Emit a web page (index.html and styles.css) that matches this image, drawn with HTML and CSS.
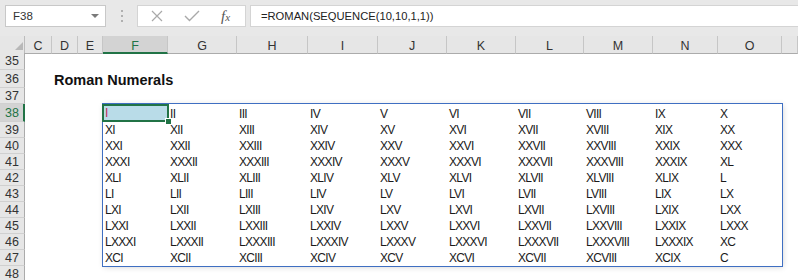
FILE: index.html
```html
<!DOCTYPE html>
<html lang="en">
<head>
    <meta charset="UTF-8">
    <title>Roman Numerals - Sheet</title>
    <link rel="stylesheet" href="styles.css">
</head>
<body>
    <div class="toolbar">
        <div class="namebox">F38<span class="caret"></span></div>
        <div class="grip"><i></i><i></i><i></i></div>
        <div class="fxbox">
            <svg class="icon" width="12" height="12" viewBox="0 0 12 12"><path d="M1 1L11 11M11 1L1 11" stroke="#a9a9a9" stroke-width="1.2" fill="none"/></svg>
            <svg class="icon" width="16" height="12" viewBox="0 0 16 12"><path d="M1 6L5.5 10.5L15 1" stroke="#a9a9a9" stroke-width="1.4" fill="none"/></svg>
            <span class="fx">f<small>x</small></span>
        </div>
        <div class="formula">=ROMAN(SEQUENCE(10,10,1,1))</div>
    </div>

    <div class="colheads">
        <div class="corner"><svg width="25" height="17" viewBox="0 0 25 17"><polygon points="23,6 23,14 15,14" fill="#b8b8b8"/></svg></div>
        <div class="ch">C</div>
        <div class="ch">D</div>
        <div class="ch">E</div>
        <div class="ch sel">F</div>
        <div class="ch">G</div>
        <div class="ch">H</div>
        <div class="ch">I</div>
        <div class="ch">J</div>
        <div class="ch">K</div>
        <div class="ch">L</div>
        <div class="ch">M</div>
        <div class="ch">N</div>
        <div class="ch">O</div>
        <div class="ch"></div>
    </div>

    <div class="body">
        <div class="rowheads">
            <div class="rh r17">35</div>
            <div class="rh r18">36</div>
            <div class="rh r16">37</div>
            <div class="rh r18 sel">38</div>
            <div class="rh">39</div>
            <div class="rh">40</div>
            <div class="rh">41</div>
            <div class="rh">42</div>
            <div class="rh">43</div>
            <div class="rh">44</div>
            <div class="rh">45</div>
            <div class="rh">46</div>
            <div class="rh">47</div>
            <div class="rh">48</div>
        </div>

        <div class="cells">
            <div class="title">Roman Numerals</div>

            <!-- spill range F38:O47 -->
            <div class="spill">
                <div class="c active"><span>I</span></div><div class="c">II</div><div class="c">III</div><div class="c">IV</div><div class="c">V</div><div class="c">VI</div><div class="c">VII</div><div class="c">VIII</div><div class="c">IX</div><div class="c">X</div>
                <div class="c">XI</div><div class="c">XII</div><div class="c">XIII</div><div class="c">XIV</div><div class="c">XV</div><div class="c">XVI</div><div class="c">XVII</div><div class="c">XVIII</div><div class="c">XIX</div><div class="c">XX</div>
                <div class="c">XXI</div><div class="c">XXII</div><div class="c">XXIII</div><div class="c">XXIV</div><div class="c">XXV</div><div class="c">XXVI</div><div class="c">XXVII</div><div class="c">XXVIII</div><div class="c">XXIX</div><div class="c">XXX</div>
                <div class="c">XXXI</div><div class="c">XXXII</div><div class="c">XXXIII</div><div class="c">XXXIV</div><div class="c">XXXV</div><div class="c">XXXVI</div><div class="c">XXXVII</div><div class="c">XXXVIII</div><div class="c">XXXIX</div><div class="c">XL</div>
                <div class="c">XLI</div><div class="c">XLII</div><div class="c">XLIII</div><div class="c">XLIV</div><div class="c">XLV</div><div class="c">XLVI</div><div class="c">XLVII</div><div class="c">XLVIII</div><div class="c">XLIX</div><div class="c">L</div>
                <div class="c">LI</div><div class="c">LII</div><div class="c">LIII</div><div class="c">LIV</div><div class="c">LV</div><div class="c">LVI</div><div class="c">LVII</div><div class="c">LVIII</div><div class="c">LIX</div><div class="c">LX</div>
                <div class="c">LXI</div><div class="c">LXII</div><div class="c">LXIII</div><div class="c">LXIV</div><div class="c">LXV</div><div class="c">LXVI</div><div class="c">LXVII</div><div class="c">LXVIII</div><div class="c">LXIX</div><div class="c">LXX</div>
                <div class="c">LXXI</div><div class="c">LXXII</div><div class="c">LXXIII</div><div class="c">LXXIV</div><div class="c">LXXV</div><div class="c">LXXVI</div><div class="c">LXXVII</div><div class="c">LXXVIII</div><div class="c">LXXIX</div><div class="c">LXXX</div>
                <div class="c">LXXXI</div><div class="c">LXXXII</div><div class="c">LXXXIII</div><div class="c">LXXXIV</div><div class="c">LXXXV</div><div class="c">LXXXVI</div><div class="c">LXXXVII</div><div class="c">LXXXVIII</div><div class="c">LXXXIX</div><div class="c">XC</div>
                <div class="c">XCI</div><div class="c">XCII</div><div class="c">XCIII</div><div class="c">XCIV</div><div class="c">XCV</div><div class="c">XCVI</div><div class="c">XCVII</div><div class="c">XCVIII</div><div class="c">XCIX</div><div class="c">C</div>
            </div>
        </div>
    </div>
</body>
</html>
```

FILE: styles.css
```css
html, body {
    margin: 0;
    padding: 0;
}

body {
    width: 798px;
    height: 280px;
    overflow: hidden;
    background: #ffffff;
    font-family: "Liberation Sans", Arial, sans-serif;
    color: #222;
}

/* Formula bar */
.toolbar {
    height: 36px;
    background: #e8e8e8;
    display: flex;
    align-items: flex-start;
    padding: 5px 0 0 5px;
    box-sizing: border-box;
}

.namebox {
    width: 101px;
    height: 22px;
    box-sizing: border-box;
    background: #fff;
    border: 1px solid #c8c8c8;
    font-size: 11.5px;
    padding-left: 7px;
    display: flex;
    align-items: center;
    justify-content: space-between;
    padding-right: 6px;
    color: #333;
}

.caret {
    width: 0;
    height: 0;
    border-left: 4px solid transparent;
    border-right: 4px solid transparent;
    border-top: 4px solid #7a7a7a;
}

.grip {
    width: 31px;
    height: 22px;
    display: flex;
    flex-direction: column;
    align-items: center;
    justify-content: center;
    gap: 3px;
}

.grip i {
    width: 2px;
    height: 2px;
    background: #b0b0b0;
}

.fxbox {
    width: 109px;
    height: 22px;
    box-sizing: border-box;
    background: #fff;
    border: 1px solid #d4d4d4;
    display: flex;
    align-items: center;
    padding-left: 13px;
}

.fxbox .icon {
    display: block;
}

.fxbox .icon + .icon {
    margin-left: 21px;
}

.fx {
    margin-left: 21px;
    font-family: "Liberation Serif", serif;
    font-style: italic;
    font-size: 15px;
    color: #555;
    line-height: 1;
}

.fx small {
    font-size: 11px;
}

.formula {
    flex: 1;
    margin-left: 4px;
    height: 22px;
    box-sizing: border-box;
    background: #fff;
    border: 1px solid #d4d4d4;
    border-right: none;
    font-size: 11.2px;
    padding-left: 10px;
    display: flex;
    align-items: center;
    color: #222;
}

/* Column headers */
.colheads {
    display: grid;
    grid-template-columns: 25px 27px 26px 25px 65px 69px 71px 70px 69px 69px 68px 69px 65px 64px 1fr;
    height: 17px;
    background: #e6e6e6;
}

.corner {
    border-right: 1px solid #bcbcbc;
    border-bottom: 1px solid #ababab;
    box-sizing: border-box;
}

.corner svg {
    display: block;
}

.ch {
    border-right: 1px solid #c6c6c6;
    border-bottom: 1px solid #ababab;
    box-sizing: border-box;
    font-size: 12.5px;
    line-height: 1;
    color: #333;
    display: flex;
    align-items: flex-end;
    justify-content: center;
    padding-bottom: 1px;
}

.ch.sel {
    background: #d3d3d3;
    color: #217346;
    border-bottom: 2px solid #217346;
    padding-bottom: 0;
}

/* Sheet body */
.body {
    display: flex;
}

.rowheads {
    width: 25px;
    flex: none;
    display: flex;
    flex-direction: column;
    background: #e6e6e6;
}

.rh {
    height: 16px;
    box-sizing: border-box;
    border-right: 1px solid #ababab;
    border-bottom: 1px solid #d0d0d0;
    font-size: 12.5px;
    line-height: 1;
    color: #333;
    display: flex;
    align-items: center;
    justify-content: center;
    padding-top: 1px;
}

.rh.r16 { height: 16px; }
.rh.r17 { height: 17px; }
.rh.r18 { height: 18px; }

.rh.sel {
    background: #d3d3d3;
    color: #217346;
    border-right: 2px solid #217346;
    padding-left: 1px;
}

.cells {
    flex: 1;
    display: grid;
    grid-template-columns: 27px 26px 25px 65px 69px 71px 70px 69px 69px 68px 69px 65px 64px 1fr;
    grid-template-rows: 17px 18px 16px 18px repeat(9, 16px) 16px;
}

.title {
    grid-row: 2;
    grid-column: 2 / span 5;
    font-weight: bold;
    font-size: 14.5px;
    color: #111;
    line-height: 1;
    display: flex;
    align-items: flex-end;
    padding-left: 2px;
    padding-bottom: 1px;
}

.spill {
    grid-row: 4 / span 10;
    grid-column: 4 / span 10;
    display: grid;
    grid-template-columns: 65px 69px 71px 70px 69px 69px 68px 69px 65px 64px;
    grid-template-rows: 18px repeat(9, 16px);
    box-shadow: 0 0 0 1px #3f6fc2, 1px 1px 6px rgba(0, 0, 0, 0.18);
    background: #fff;
}

.c {
    font-size: 12px;
    letter-spacing: -0.7px;
    line-height: 1;
    color: #1a1a1a;
    display: flex;
    align-items: flex-end;
    padding-left: 2px;
    padding-bottom: 2px;
    white-space: nowrap;
}

.c.active {
    position: relative;
    background: #b9dce8;
    color: #c0305a;
    padding-bottom: 3px;
}

.c.active::before {
    content: "";
    position: absolute;
    left: -1px;
    top: 0;
    right: -1px;
    bottom: 0;
    border: 2px solid #217346;
}

.c.active::after {
    content: "";
    position: absolute;
    right: -4px;
    bottom: -3px;
    width: 5px;
    height: 5px;
    background: #217346;
    border: 1px solid #fff;
}
```
